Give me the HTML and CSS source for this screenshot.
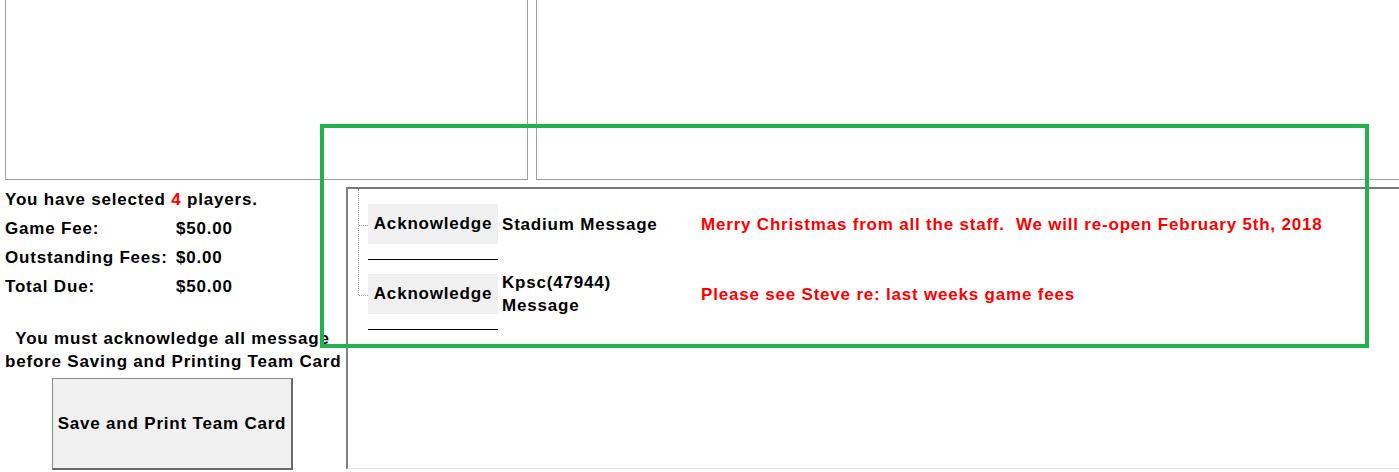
FILE: index.html
```html
<!DOCTYPE html>
<html lang="en">
<head>
<meta charset="utf-8">
<title>Team Card</title>
<link rel="stylesheet" href="styles.css">
</head>
<body>
<div class="page">
  <div class="top">
    <div class="box box-left"></div>
    <div class="box box-right"></div>
  </div>
  <div class="main">
    <div class="side">
      <div class="line">You have selected <span class="red">4</span> players.</div>
      <div class="fees">
        <span>Game Fee:</span><span>$50.00</span>
        <span>Outstanding Fees:</span><span>$0.00</span>
        <span>Total Due:</span><span>$50.00</span>
      </div>
      <div class="notice">You must acknowledge all message<br>before Saving and Printing Team Card</div>
      <button class="save" type="button">Save and Print Team Card</button>
    </div>
    <div class="panel">
      <div class="tree">
        <div class="msg">
          <div class="msg-row">
            <button class="ack" type="button">Acknowledge</button>
            <span class="title">Stadium Message</span>
            <span class="text">Merry Christmas from all the staff.  We will re-open February 5th, 2018</span>
          </div>
          <div class="rule"></div>
        </div>
        <div class="msg">
          <div class="msg-row">
            <button class="ack" type="button">Acknowledge</button>
            <span class="title">Kpsc(47944)<br>Message</span>
            <span class="text">Please see Steve re: last weeks game fees</span>
          </div>
          <div class="rule"></div>
        </div>
      </div>
    </div>
  </div>
  <div class="highlight"></div>
</div>
</body>
</html>
```
FILE: styles.css
```css
html, body {
  margin: 0;
  padding: 0;
  background: #ffffff;
}
body {
  width: 1399px;
  height: 472px;
  overflow: hidden;
  font-family: "Liberation Sans", Arial, sans-serif;
  font-weight: bold;
  font-size: 17px;
  letter-spacing: 0.8px;
  color: #000;
}
.page {
  position: relative;
  width: 1399px;
  height: 472px;
}
.top {
  display: flex;
  gap: 8px;
  padding-left: 5px;
  height: 180px;
}
.box {
  box-sizing: border-box;
  height: 180px;
  border: 1px solid #a0a0a0;
  border-top: none;
}
.box-left {
  width: 523px;
}
.box-right {
  flex: 1;
  border-right: none;
}
.main {
  display: flex;
  align-items: flex-start;
}
.side {
  width: 336px;
  padding-left: 5px;
  padding-top: 5px;
  flex: none;
}
.line {
  line-height: 29px;
  white-space: nowrap;
}
.red {
  color: #ff0000;
}
.fees {
  display: grid;
  grid-template-columns: 171px auto;
  line-height: 29px;
  white-space: nowrap;
}
.notice {
  margin-top: 26px;
  width: 335px;
  text-align: center;
  line-height: 23px;
  white-space: nowrap;
}
.save {
  display: block;
  margin: 5px 0 0 47px;
  width: 241px;
  height: 92px;
  box-sizing: border-box;
  background: #f0f0f0;
  border-top: 1px solid #8a8a8a;
  border-left: 1px solid #8a8a8a;
  border-right: 2px solid #696969;
  border-bottom: 2px solid #696969;
  font: inherit;
  letter-spacing: inherit;
  color: #000;
  padding: 0;
}
.panel {
  flex: 1;
  margin-top: 7px;
  margin-left: 5px;
  height: 282px;
  box-sizing: border-box;
  border-top: 2px solid #787878;
  border-left: 2px solid #808080;
  border-bottom: 1px solid #e3e3e3;
}
.tree {
  position: relative;
  padding: 15px 0 0 20px;
}
.tree::before {
  content: "";
  position: absolute;
  left: 10px;
  top: 0;
  height: 106px;
  border-left: 1px dotted #a0a0a0;
}
.msg {
  position: relative;
}
.msg::before {
  content: "";
  position: absolute;
  left: -9px;
  top: 21px;
  width: 9px;
  border-top: 1px dotted #a0a0a0;
}
.msg-row {
  display: grid;
  grid-template-columns: 130px 203px 1fr;
  grid-template-rows: 40px;
  align-items: center;
  height: 40px;
}
.ack {
  height: 40px;
  width: 130px;
  background: #f0f0f0;
  border: none;
  padding: 0;
  font: inherit;
  letter-spacing: inherit;
  color: #000;
}
.title {
  padding-left: 4px;
  line-height: 23px;
}
.text {
  color: #ff0000;
  white-space: pre;
  line-height: 23px;
}
.rule {
  width: 130px;
  height: 1px;
  background: #000;
  margin: 15px 0 14px;
}
.highlight {
  position: absolute;
  left: 320px;
  top: 124px;
  width: 1049px;
  height: 224px;
  box-sizing: border-box;
  border: 4px solid #22b14c;
  pointer-events: none;
}
```
